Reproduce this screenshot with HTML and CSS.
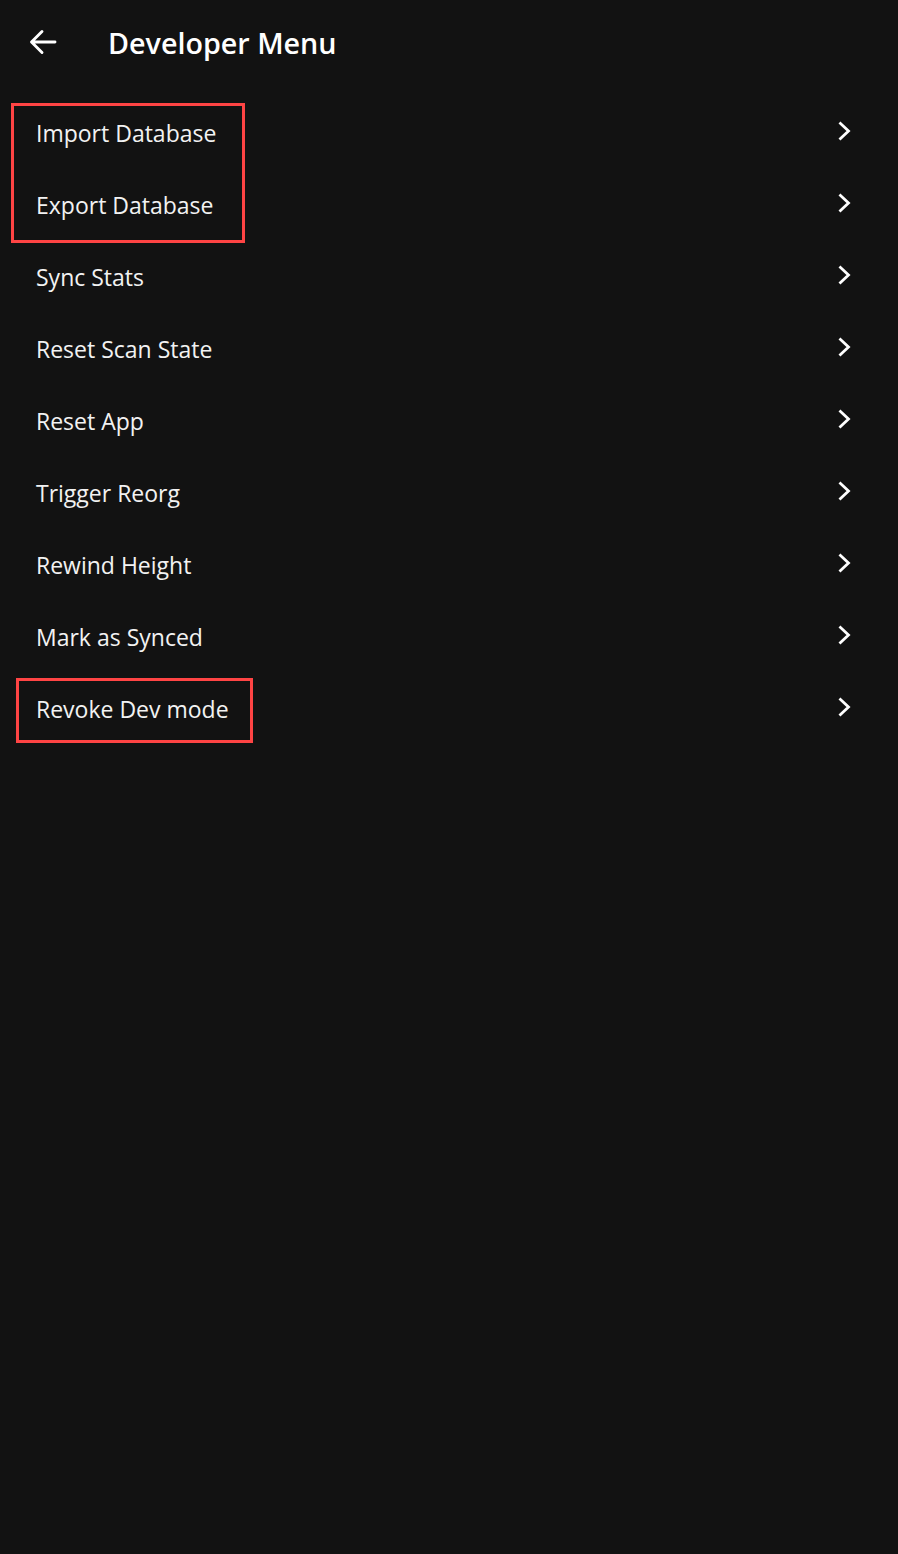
FILE: index.html
```html
<!DOCTYPE html>
<html>
<head>
<meta charset="utf-8">
<link rel="stylesheet" href="styles.css">
</head>
<body>
<div class="screen">
  <header class="header">
    <svg class="back" width="30" height="28" viewBox="0 0 30 28"><path d="M27 14H4M14 3.5L3.5 14 14 24.5" fill="none" stroke="#fff" stroke-width="2.9" stroke-linecap="round" stroke-linejoin="round"/></svg>
    <h1 class="title">Developer Menu</h1>
  </header>
  <ul class="list">
    <li class="row"><span class="label">Import Database</span><svg class="chev" width="14" height="20" viewBox="0 0 14 20"><path d="M2.5 2.5L10.5 10 2.5 17.5" fill="none" stroke="#fff" stroke-width="2.8" stroke-linecap="square"/></svg></li>
    <li class="row"><span class="label">Export Database</span><svg class="chev" width="14" height="20" viewBox="0 0 14 20"><path d="M2.5 2.5L10.5 10 2.5 17.5" fill="none" stroke="#fff" stroke-width="2.8" stroke-linecap="square"/></svg></li>
    <li class="row"><span class="label">Sync Stats</span><svg class="chev" width="14" height="20" viewBox="0 0 14 20"><path d="M2.5 2.5L10.5 10 2.5 17.5" fill="none" stroke="#fff" stroke-width="2.8" stroke-linecap="square"/></svg></li>
    <li class="row"><span class="label">Reset Scan State</span><svg class="chev" width="14" height="20" viewBox="0 0 14 20"><path d="M2.5 2.5L10.5 10 2.5 17.5" fill="none" stroke="#fff" stroke-width="2.8" stroke-linecap="square"/></svg></li>
    <li class="row"><span class="label">Reset App</span><svg class="chev" width="14" height="20" viewBox="0 0 14 20"><path d="M2.5 2.5L10.5 10 2.5 17.5" fill="none" stroke="#fff" stroke-width="2.8" stroke-linecap="square"/></svg></li>
    <li class="row"><span class="label">Trigger Reorg</span><svg class="chev" width="14" height="20" viewBox="0 0 14 20"><path d="M2.5 2.5L10.5 10 2.5 17.5" fill="none" stroke="#fff" stroke-width="2.8" stroke-linecap="square"/></svg></li>
    <li class="row"><span class="label">Rewind Height</span><svg class="chev" width="14" height="20" viewBox="0 0 14 20"><path d="M2.5 2.5L10.5 10 2.5 17.5" fill="none" stroke="#fff" stroke-width="2.8" stroke-linecap="square"/></svg></li>
    <li class="row"><span class="label">Mark as Synced</span><svg class="chev" width="14" height="20" viewBox="0 0 14 20"><path d="M2.5 2.5L10.5 10 2.5 17.5" fill="none" stroke="#fff" stroke-width="2.8" stroke-linecap="square"/></svg></li>
    <li class="row"><span class="label">Revoke Dev mode</span><svg class="chev" width="14" height="20" viewBox="0 0 14 20"><path d="M2.5 2.5L10.5 10 2.5 17.5" fill="none" stroke="#fff" stroke-width="2.8" stroke-linecap="square"/></svg></li>
  </ul>
  <div class="mark mark-a"></div>
  <div class="mark mark-b"></div>
</div>
</body>
</html>
```
FILE: styles.css
```css
* { box-sizing: border-box; }
html, body { margin: 0; padding: 0; background: #121212; }
body { font-family: "Open Sans", "Noto Sans", sans-serif; color: #fff; }
.screen { position: relative; width: 898px; height: 1554px; background: #121212; }
.header { height: 90px; display: flex; align-items: center; padding-left: 28px; gap: 50px; }
.back { display: block; margin-top: -6px; }
.title { margin: 0; font-size: 28.7px; font-weight: 600; letter-spacing: 0; line-height: 1; margin-top: -3px; }
.list { list-style: none; margin: 7px 0 0; padding: 0; }
.row { height: 72px; display: flex; align-items: center; justify-content: space-between; padding: 0 46px 0 36px; }
.label { font-size: 23px; font-weight: 400; color: #f2f2f2; }
.chev { display: block; margin-top: -5px; }
.mark { position: absolute; border: 3px solid #ff4444; }
.mark-a { left: 11px; top: 103px; width: 234px; height: 140px; }
.mark-b { left: 16px; top: 678px; width: 237px; height: 65px; }
```
